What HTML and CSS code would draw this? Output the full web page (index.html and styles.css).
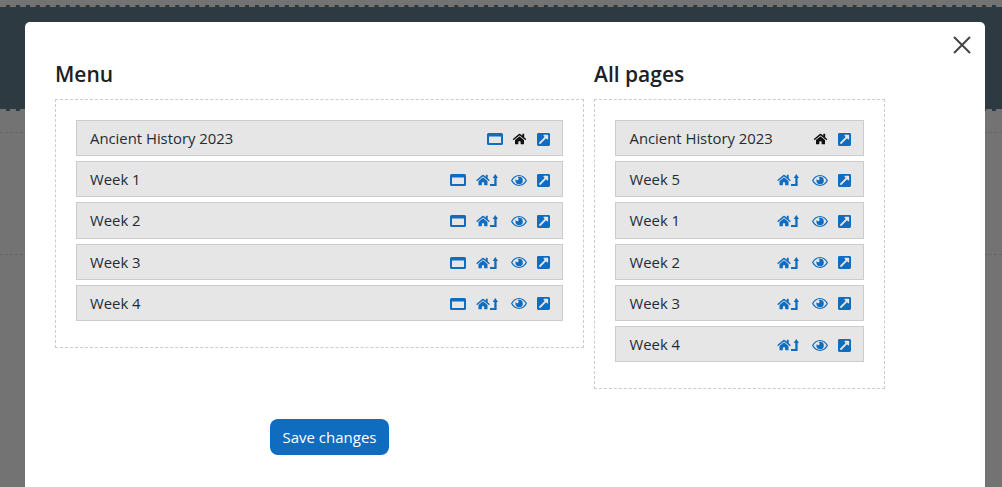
FILE: index.html
```html
<!DOCTYPE html>
<html lang="en">
<head>
<meta charset="utf-8">
<title>Menu editor</title>
<link rel="stylesheet" href="styles.css">
</head>
<body>
<svg class="sprite" width="0" height="0" aria-hidden="true">
  <symbol id="i-window" viewBox="0 0 16 12"><path fill-rule="evenodd" d="M1.500 0h13A1.500 1.500 0 0 1 16 1.500v9a1.500 1.500 0 0 1-1.500 1.500h-13A1.500 1.500 0 0 1 0 10.500v-9A1.500 1.500 0 0 1 1.500 0zM2 3.500V10h12V3.500z"/></symbol>
  <symbol id="i-home" viewBox="0 0 576 512"><path d="M280.37 148.26L96 300.11V464a16 16 0 0 0 16 16l112.06-.29a16 16 0 0 0 15.92-16V368a16 16 0 0 1 16-16h64a16 16 0 0 1 16 16v95.64a16 16 0 0 0 16 16.05L464 480a16 16 0 0 0 16-16V300L295.67 148.26a12.19 12.19 0 0 0-15.3 0zM571.6 251.47L488 182.56V44.05a12 12 0 0 0-12-12h-56a12 12 0 0 0-12 12v72.61L318.47 43a48 48 0 0 0-61 0L4.34 251.47a12 12 0 0 0-1.6 16.9l25.5 31A12 12 0 0 0 45.15 301l235.22-193.74a12.19 12.19 0 0 1 15.3 0L530.9 301a12 12 0 0 0 16.9-1.600l25.5-31a12 12 0 0 0-1.700-16.930z"/></symbol>
  <symbol id="i-up" viewBox="0 0 8 12"><path d="M5.300 0 8 4H6.600v8H0v-2h4.300V4H2.700z"/></symbol>
  <symbol id="i-eye" viewBox="0 0 16 11"><path fill-rule="evenodd" d="M8 0c3.500 0 6.400 2.200 8 5.500C14.400 8.800 11.500 11 8 11S1.600 8.800 0 5.500C1.600 2.200 4.500 0 8 0zM8 1.100c-2.700 0-5 1.700-6.600 4.400C3 8.200 5.300 9.900 8 9.900s5-1.700 6.600-4.400C13 2.800 10.700 1.100 8 1.100zM8 1.800a3.700 3.700 0 1 1-3.600 3.700c0-.5.100-1 .3-1.400.2.700.8 1.100 1.400 1.100.9 0 1.500-.7 1.500-1.500 0-.7-.4-1.300-1-1.600.4-.2.900-.3 1.400-.3z"/></symbol>
  <symbol id="i-link" viewBox="0 32 448 448"><path d="M448 80v352c0 26.51-21.49 48-48 48H48c-26.51 0-48-21.49-48-48V80c0-26.51 21.49-48 48-48h352c26.51 0 48 21.49 48 48zm-88 16H248.029c-21.313 0-32.08 25.861-16.971 40.971l31.984 31.987L67.515 364.485c-4.686 4.686-4.686 12.284 0 16.971l31.029 31.029c4.687 4.686 12.285 4.686 16.971 0l195.526-195.526 31.988 31.991C357.058 263.977 384 253.425 384 231.979V120c0-13.255-10.745-24-24-24z"/></symbol>
</svg>

<div class="backdrop">
  <div class="band"></div>
  <div class="rule rule-first"></div>
  <div class="rule rule-second"></div>
</div>

<main class="modal">
  <button class="close" type="button" aria-label="Close">
    <svg width="20" height="20" viewBox="0 0 20 20"><path d="M2 2l16 16M18 2 2 18"/></svg>
  </button>
  <div class="columns">
    <section class="col col-menu">
      <h2>Menu</h2>
      <ul class="list">
        <li class="item"><span>Ancient History 2023</span>
          <span class="icons">
            <svg class="ic w tight"><use href="#i-window"/></svg>
            <svg class="ic h black"><use href="#i-home"/></svg>
            <svg class="ic l"><use href="#i-link"/></svg>
          </span></li>
        <li class="item"><span>Week 1</span>
          <span class="icons">
            <svg class="ic w"><use href="#i-window"/></svg>
            <span class="pair"><svg class="ic h"><use href="#i-home"/></svg><svg class="ic u"><use href="#i-up"/></svg></span>
            <svg class="ic e"><use href="#i-eye"/></svg>
            <svg class="ic l"><use href="#i-link"/></svg>
          </span></li>
        <li class="item"><span>Week 2</span>
          <span class="icons">
            <svg class="ic w"><use href="#i-window"/></svg>
            <span class="pair"><svg class="ic h"><use href="#i-home"/></svg><svg class="ic u"><use href="#i-up"/></svg></span>
            <svg class="ic e"><use href="#i-eye"/></svg>
            <svg class="ic l"><use href="#i-link"/></svg>
          </span></li>
        <li class="item"><span>Week 3</span>
          <span class="icons">
            <svg class="ic w"><use href="#i-window"/></svg>
            <span class="pair"><svg class="ic h"><use href="#i-home"/></svg><svg class="ic u"><use href="#i-up"/></svg></span>
            <svg class="ic e"><use href="#i-eye"/></svg>
            <svg class="ic l"><use href="#i-link"/></svg>
          </span></li>
        <li class="item"><span>Week 4</span>
          <span class="icons">
            <svg class="ic w"><use href="#i-window"/></svg>
            <span class="pair"><svg class="ic h"><use href="#i-home"/></svg><svg class="ic u"><use href="#i-up"/></svg></span>
            <svg class="ic e"><use href="#i-eye"/></svg>
            <svg class="ic l"><use href="#i-link"/></svg>
          </span></li>
      </ul>
      <div class="actions"><button class="save" type="button">Save changes</button></div>
    </section>
    <section class="col col-pages">
      <h2>All pages</h2>
      <ul class="list">
        <li class="item"><span>Ancient History 2023</span>
          <span class="icons">
            <svg class="ic h black"><use href="#i-home"/></svg>
            <svg class="ic l"><use href="#i-link"/></svg>
          </span></li>
        <li class="item"><span>Week 5</span>
          <span class="icons">
            <span class="pair"><svg class="ic h"><use href="#i-home"/></svg><svg class="ic u"><use href="#i-up"/></svg></span>
            <svg class="ic e"><use href="#i-eye"/></svg>
            <svg class="ic l"><use href="#i-link"/></svg>
          </span></li>
        <li class="item"><span>Week 1</span>
          <span class="icons">
            <span class="pair"><svg class="ic h"><use href="#i-home"/></svg><svg class="ic u"><use href="#i-up"/></svg></span>
            <svg class="ic e"><use href="#i-eye"/></svg>
            <svg class="ic l"><use href="#i-link"/></svg>
          </span></li>
        <li class="item"><span>Week 2</span>
          <span class="icons">
            <span class="pair"><svg class="ic h"><use href="#i-home"/></svg><svg class="ic u"><use href="#i-up"/></svg></span>
            <svg class="ic e"><use href="#i-eye"/></svg>
            <svg class="ic l"><use href="#i-link"/></svg>
          </span></li>
        <li class="item"><span>Week 3</span>
          <span class="icons">
            <span class="pair"><svg class="ic h"><use href="#i-home"/></svg><svg class="ic u"><use href="#i-up"/></svg></span>
            <svg class="ic e"><use href="#i-eye"/></svg>
            <svg class="ic l"><use href="#i-link"/></svg>
          </span></li>
        <li class="item"><span>Week 4</span>
          <span class="icons">
            <span class="pair"><svg class="ic h"><use href="#i-home"/></svg><svg class="ic u"><use href="#i-up"/></svg></span>
            <svg class="ic e"><use href="#i-eye"/></svg>
            <svg class="ic l"><use href="#i-link"/></svg>
          </span></li>
      </ul>
    </section>
  </div>
</main>
</body>
</html>
```
FILE: styles.css
```css
* { box-sizing: border-box; }
html, body { height: 100%; margin: 0; }
body {
  overflow: hidden;
  background: #737373;
  font-family: "Open Sans", "Liberation Sans", sans-serif;
  color: #232c36;
}
.sprite { position: absolute; }

.backdrop { position: absolute; inset: 0; overflow: hidden; }
.band {
  margin-top: 5px;
  height: 106px;
  background: #2d3a41;
  border-top: 2px dashed #737373;
  border-bottom: 2px dashed #737373;
}
.rule { border-top: 1px dashed #666; }
.rule-first { margin-top: 21px; }
.rule-second { margin-top: 121px; }

.modal {
  position: absolute;
  left: 25px;
  top: 22px;
  width: 960px;
  height: 480px;
  padding: 30px;
  background: #fff;
  border-radius: 5px 5px 0 0;
}
.close {
  position: absolute;
  top: 13px;
  right: 13px;
  padding: 0;
  width: 20px;
  height: 20px;
  border: 0;
  background: none;
  line-height: 0;
}
.close path { stroke: #444; stroke-width: 2; fill: none; }

.columns { display: flex; align-items: flex-start; gap: 10px; }
.col-menu { width: 529px; }
.col-pages { width: 291px; }
h2 {
  margin: 7px 0 10px;
  font-size: 21px;
  line-height: 30px;
  font-weight: 600;
  color: #1d2125;
}
.list {
  list-style: none;
  margin: 0;
  padding: 20px 20px 26px;
  border: 1px dashed #ccc;
  display: flex;
  flex-direction: column;
  gap: 5px;
}
.item {
  display: flex;
  justify-content: space-between;
  align-items: center;
  height: 36.2px;
  padding: 0 12px 0 13px;
  background: #e6e6e6;
  border: 1px solid #ccc;
  font-size: 14.850px;
  line-height: 20px;
}
.col-pages .item { padding-left: 13.500px; }
.icons { display: flex; align-items: center; margin-top: 2px; }
.pair { display: flex; align-items: center; margin-right: 13px; }
.ic { display: block; fill: #0f6cbf; }
.ic.black { fill: #111; }
.ic.w { width: 16px; height: 12px; margin-right: 10px; }
.ic.w.tight { margin-right: 9px; }
.ic.h { width: 14px; height: 12px; }
.icons > .ic.h { width: 15px; margin-right: 10px; }
.ic.u { width: 8px; height: 12px; }
.ic.e { width: 16px; height: 11px; margin-right: 10px; }
.ic.l { width: 13px; height: 13px; }

.actions { display: flex; justify-content: center; margin-top: 71px; padding-left: 20px; }
.save {
  height: 36px;
  padding: 0 12px;
  border: 0;
  border-radius: 8px;
  background: #0f6cbf;
  color: #fff;
  font: 400 15px/20px "Open Sans", "Liberation Sans", sans-serif;
}
```
